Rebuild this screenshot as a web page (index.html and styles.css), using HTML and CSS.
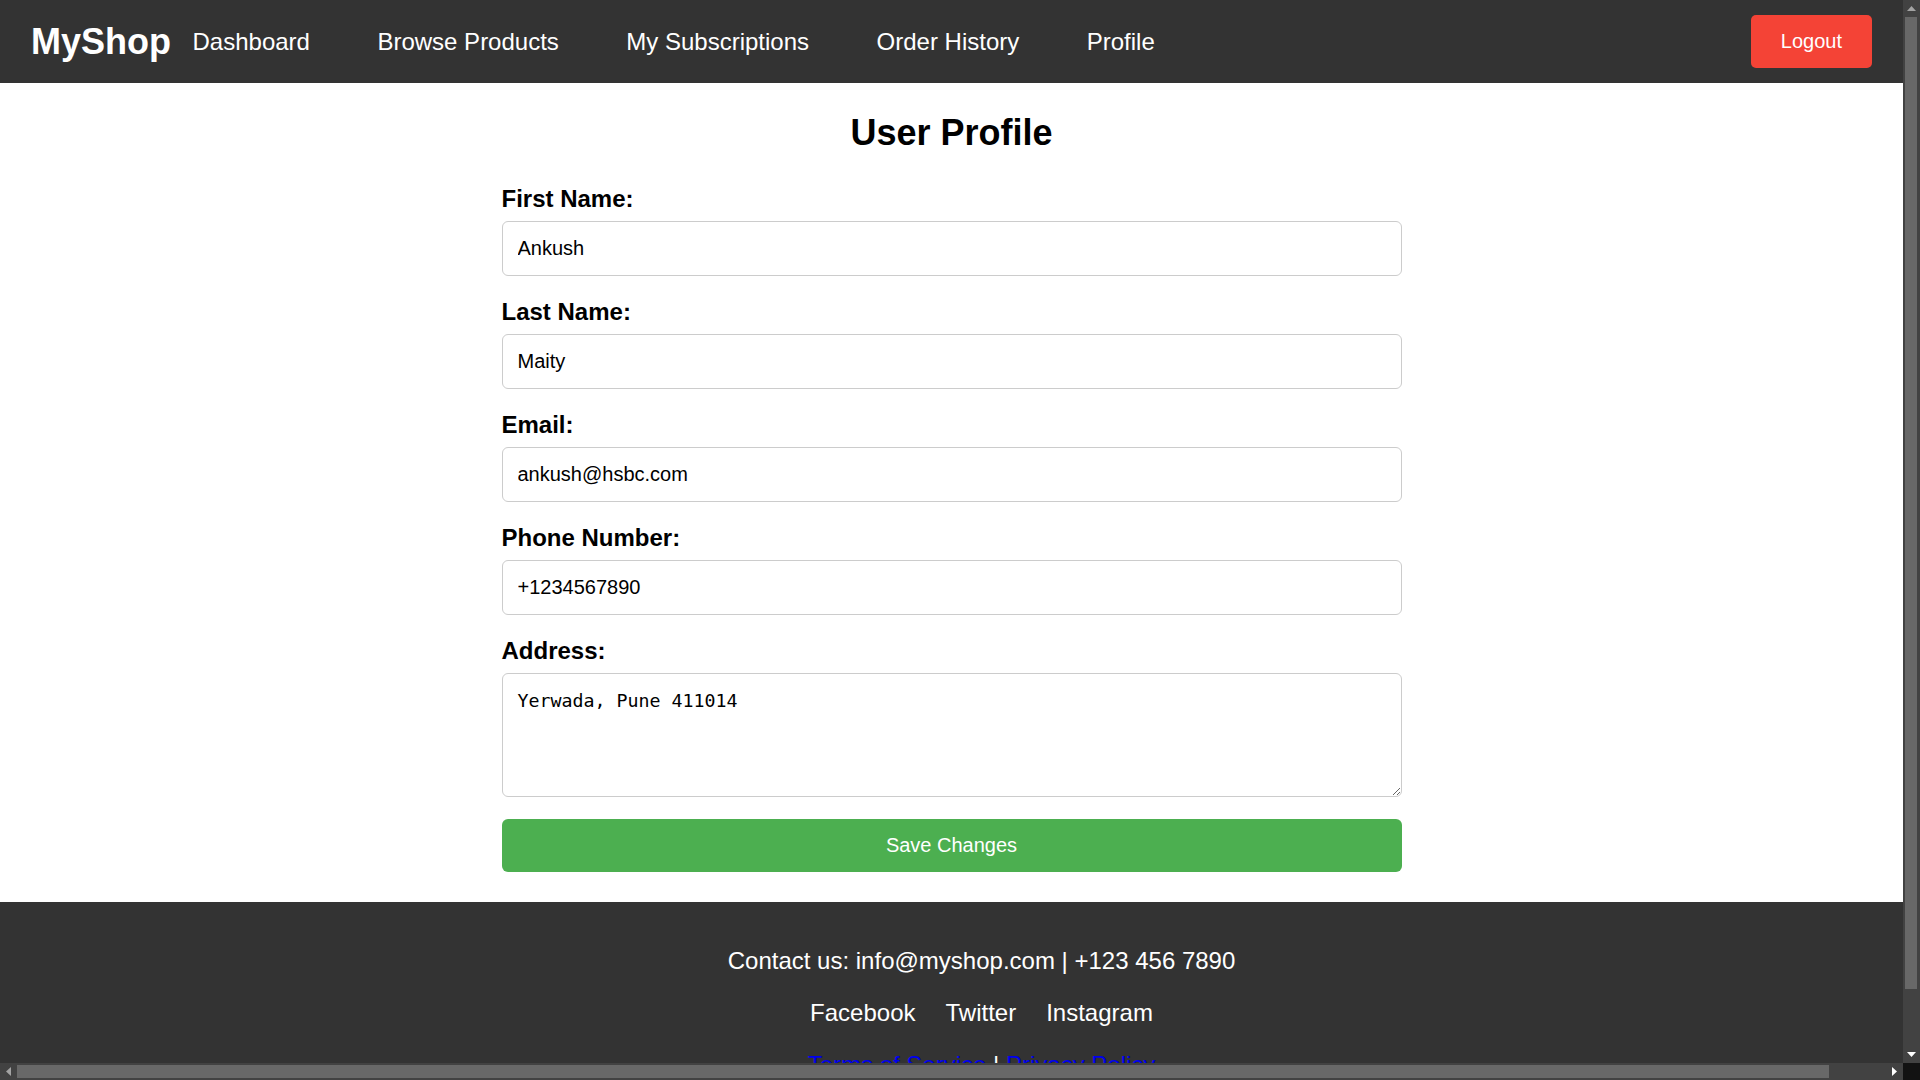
FILE: index.html
```html
<!DOCTYPE html>
<html lang="en">
<head>
<meta charset="utf-8">
<title>MyShop - User Profile</title>
<link rel="stylesheet" href="styles.css">
</head>
<body>
<header class="navbar">
  <div class="nav-left">
    <a class="brand" href="#">MyShop</a>
    <nav class="nav-links">
      <a href="#">Dashboard</a>
      <a href="#">Browse Products</a>
      <a href="#">My Subscriptions</a>
      <a href="#">Order History</a>
      <a href="#">Profile</a>
    </nav>
  </div>
  <button class="logout" type="button">Logout</button>
</header>

<main class="container">
  <h2 class="page-title">User Profile</h2>
  <form class="profile-form">
    <div class="form-group">
      <label for="first">First Name:</label>
      <input id="first" type="text" value="Ankush">
    </div>
    <div class="form-group">
      <label for="last">Last Name:</label>
      <input id="last" type="text" value="Maity">
    </div>
    <div class="form-group">
      <label for="email">Email:</label>
      <input id="email" type="email" value="ankush@hsbc.com">
    </div>
    <div class="form-group">
      <label for="phone">Phone Number:</label>
      <input id="phone" type="text" value="+1234567890">
    </div>
    <div class="form-group">
      <label for="address">Address:</label>
      <textarea id="address">Yerwada, Pune 411014</textarea>
    </div>
    <button class="save" type="button">Save Changes</button>
  </form>
</main>

<footer class="footer">
  <p class="contact">Contact us: info@myshop.com | +123 456 7890</p>
  <div class="social">
    <a href="#">Facebook</a>
    <a href="#">Twitter</a>
    <a href="#">Instagram</a>
  </div>
  <p class="legal"><a href="#">Terms of Service</a> | <a href="#">Privacy Policy</a></p>
</footer>

<div class="sb sb-v" aria-hidden="true">
  <span class="sb-btn">
    <svg width="9" height="5" viewBox="0 0 9 5"><polygon points="4.5,0 9,5 0,5" fill="#a3a3a3"/></svg>
  </span>
  <span class="sb-thumb-v"></span>
  <span class="sb-fill"></span>
  <span class="sb-btn">
    <svg width="9" height="5" viewBox="0 0 9 5"><polygon points="0,0 9,0 4.5,5" fill="#ffffff"/></svg>
  </span>
</div>
<div class="sb sb-h" aria-hidden="true">
  <span class="sb-btn">
    <svg width="5" height="9" viewBox="0 0 5 9"><polygon points="5,0 5,9 0,4.5" fill="#a3a3a3"/></svg>
  </span>
  <span class="sb-thumb-h"></span>
  <span class="sb-fill"></span>
  <span class="sb-btn">
    <svg width="5" height="9" viewBox="0 0 5 9"><polygon points="0,0 5,4.5 0,9" fill="#ffffff"/></svg>
  </span>
</div>
<div class="sb-corner" aria-hidden="true"></div>
</body>
</html>
```

FILE: styles.css
```css
html, body {
  margin: 0;
  padding: 0;
}

html {
  overflow: hidden;
}

body {
  margin-right: 17px;
  font-family: "Liberation Sans", Arial, sans-serif;
  color: #000;
  background: #fff;
}

::-webkit-scrollbar {
  display: none;
}

/* Navbar */
.navbar {
  display: flex;
  align-items: center;
  justify-content: space-between;
  height: 83px;
  padding: 0 31px;
  background: #333;
}
.nav-left {
  display: flex;
  align-items: center;
  gap: 21.5px;
}
.brand {
  color: #fff;
  font-size: 36px;
  font-weight: bold;
  text-decoration: none;
}
.nav-links {
  display: flex;
  gap: 67.5px;
}
.nav-links a {
  color: #fff;
  font-size: 24px;
  text-decoration: none;
}
.logout {
  font-family: "Liberation Sans", Arial, sans-serif;
  font-size: 20px;
  line-height: 23px;
  color: #fff;
  background: #f44336;
  border: none;
  border-radius: 5px;
  padding: 15px 30px;
  cursor: pointer;
}

/* Main */
.container {
  max-width: 900px;
  margin: 0 auto;
  padding: 29px 0 30px;
}
.page-title {
  margin: 0 0 31px;
  text-align: center;
  font-size: 36px;
  font-weight: bold;
}
.form-group {
  margin-bottom: 22px;
}
.form-group label {
  display: block;
  margin-bottom: 8px;
  font-size: 24px;
  font-weight: bold;
}
.form-group input,
.form-group textarea {
  display: block;
  width: 100%;
  box-sizing: border-box;
  margin: 0;
  padding: 15px;
  border: 1px solid #ccc;
  border-radius: 6px;
  color: #000;
  background: #fff;
}
.form-group input {
  font-family: "Liberation Sans", Arial, sans-serif;
  font-size: 20px;
  line-height: 23px;
  height: 55px;
}
.form-group textarea {
  font-family: "DejaVu Sans Mono", "Liberation Mono", monospace;
  font-size: 18.3px;
  line-height: 21px;
  height: 124px;
  padding-top: 16px;
}
.save {
  display: block;
  width: 100%;
  font-family: "Liberation Sans", Arial, sans-serif;
  font-size: 20px;
  line-height: 23px;
  color: #fff;
  background: #4caf50;
  border: none;
  border-radius: 6px;
  padding: 15px;
  cursor: pointer;
}

/* Footer */
.footer {
  width: 100%;
  padding: 21px 30px 20px;
  background: #333;
  color: #fff;
  text-align: center;
  font-size: 24px;
}
.footer p {
  margin: 24px 0;
}
.social {
  display: flex;
  justify-content: center;
  gap: 30px;
}
.social a {
  color: #fff;
  text-decoration: none;
}
.legal a {
  color: #0000ee;
}

/* Simulated window scrollbars (overlay) */
.sb {
  position: fixed;
  display: flex;
  background: #424242;
  z-index: 10;
}
.sb-v {
  top: 0;
  right: 0;
  width: 17px;
  height: 1063px;
  flex-direction: column;
}
.sb-h {
  left: 0;
  bottom: 0;
  width: 1903px;
  height: 17px;
  flex-direction: row;
}
.sb-btn {
  flex: 0 0 17px;
  width: 17px;
  height: 17px;
  display: flex;
  align-items: center;
  justify-content: center;
}
.sb-fill {
  flex: 1;
}
.sb-thumb-v {
  flex: 0 0 972px;
  margin: 0 3px 0 2px;
  background: #686868;
}
.sb-thumb-h {
  flex: 0 0 1812px;
  margin: 2px 0 2px 0;
  background: #686868;
}
.sb-corner {
  position: fixed;
  right: 0;
  bottom: 0;
  width: 17px;
  height: 17px;
  background: #121212;
  z-index: 10;
}
```
